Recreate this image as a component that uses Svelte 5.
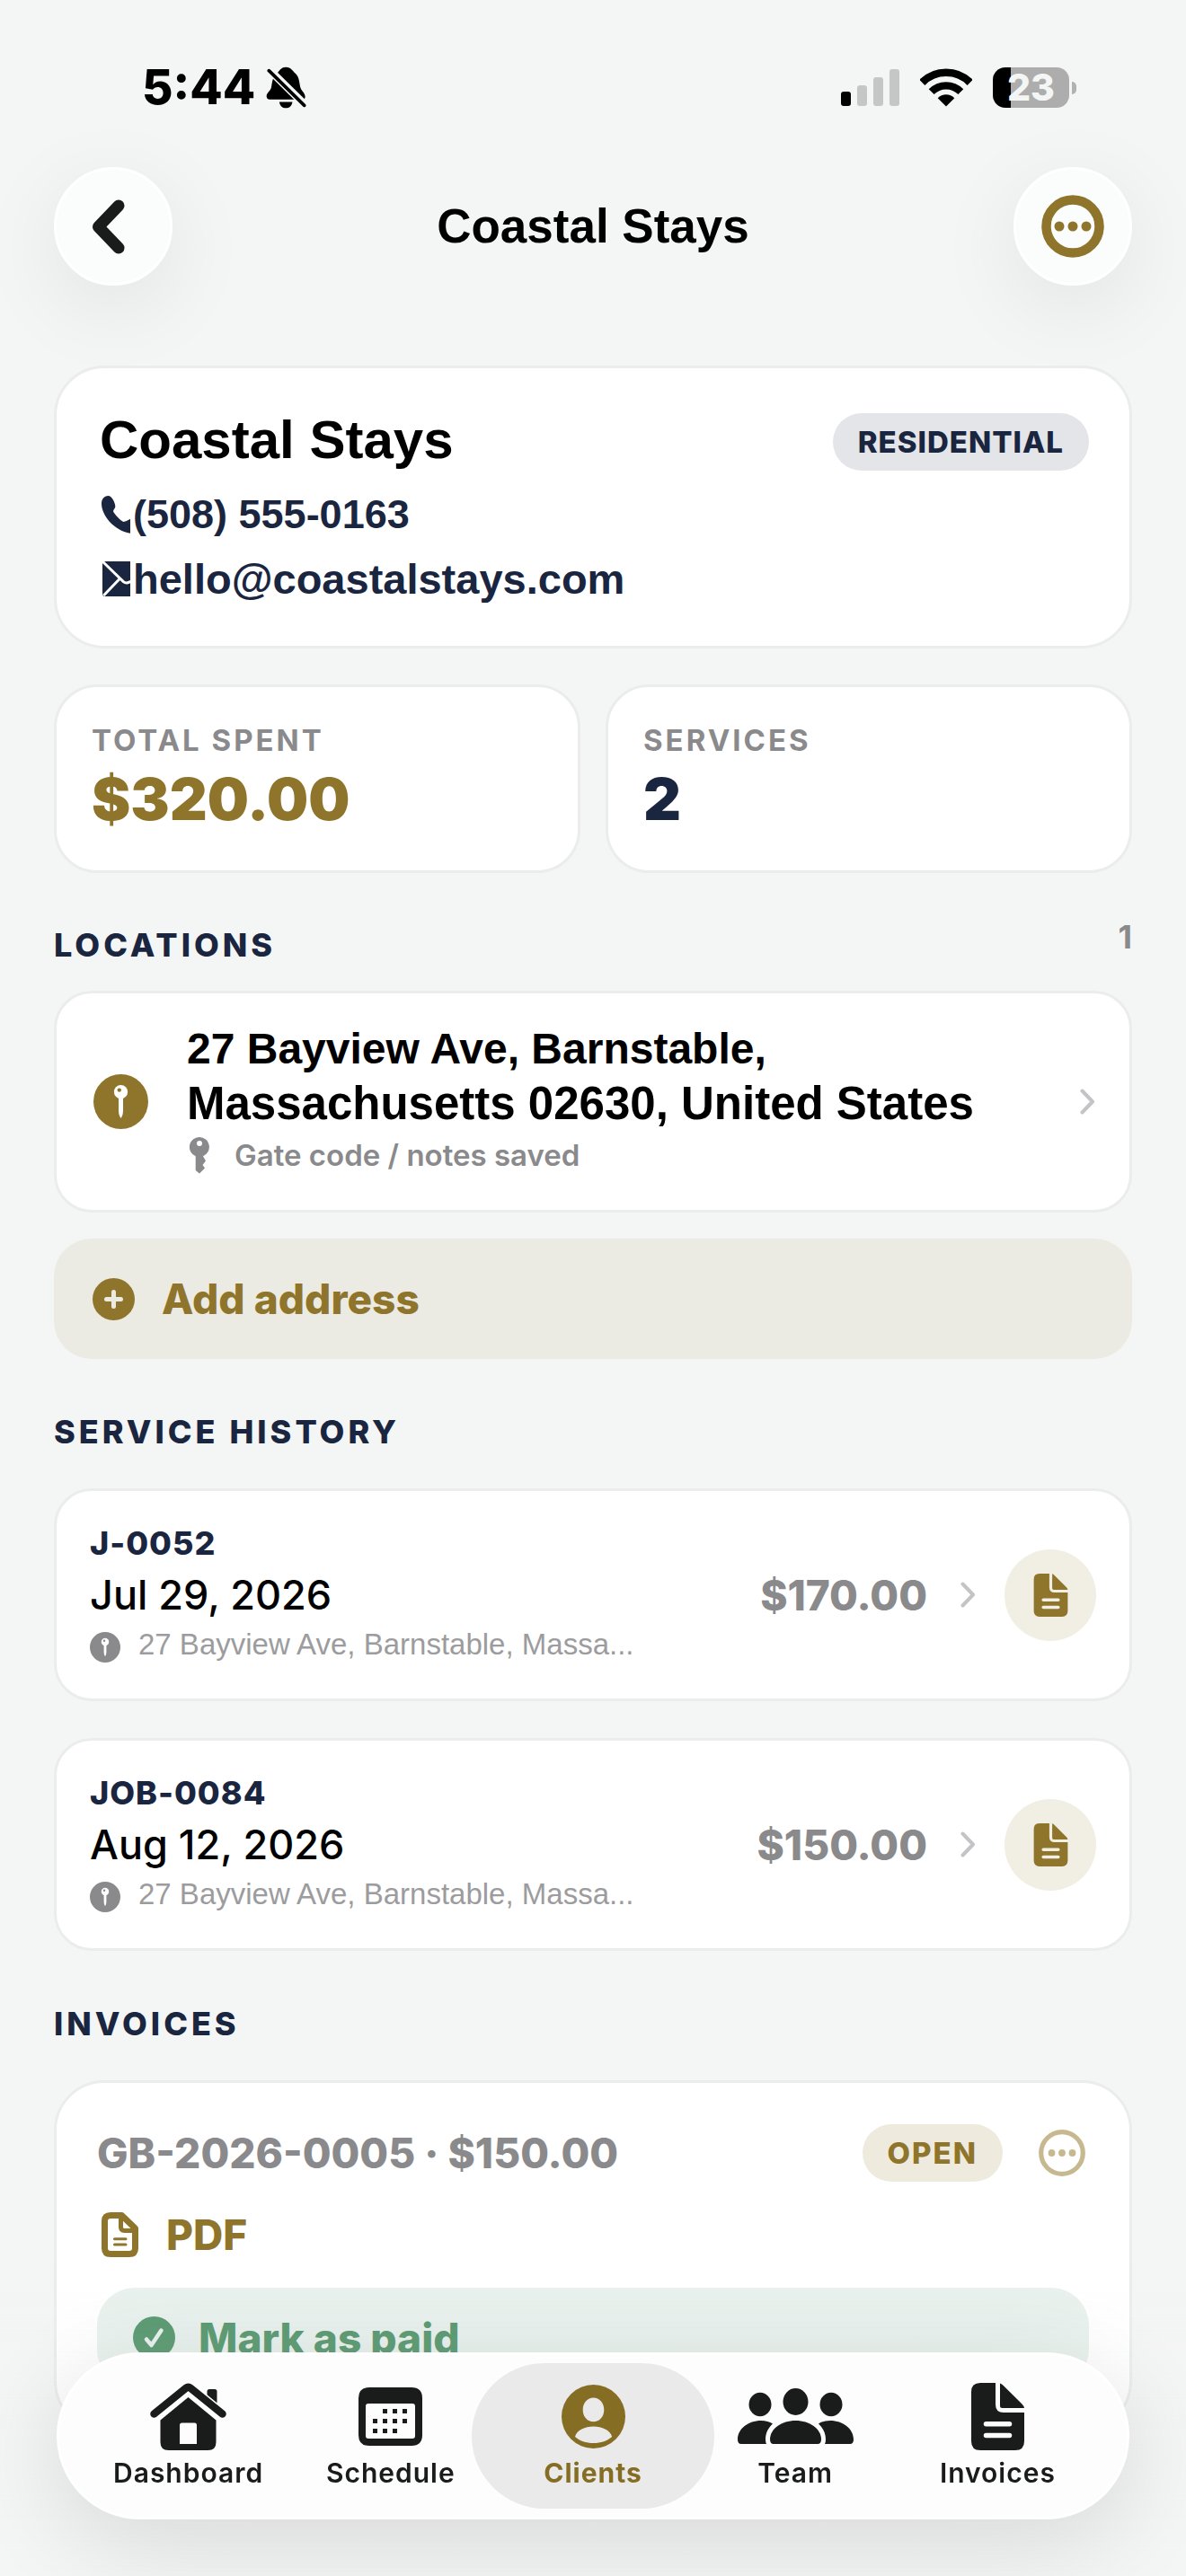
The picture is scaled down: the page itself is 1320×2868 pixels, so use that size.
<script lang="ts">
  const client = {
    name: "Coastal Stays",
    type: "RESIDENTIAL",
    phone: "(508) 555-0163",
    email: "hello@coastalstays.com",
  };

  const jobs = [
    { id: "J-0052", date: "Jul 29, 2026", address: "27 Bayview Ave, Barnstable, Massa...", price: "$170.00" },
    { id: "JOB-0084", date: "Aug 12, 2026", address: "27 Bayview Ave, Barnstable, Massa...", price: "$150.00" },
  ];

  const tabs = ["Dashboard", "Schedule", "Clients", "Team", "Invoices"];
  let active = $state("Clients");
</script>

{#snippet chevron()}
  <svg class="chevron" viewBox="0 0 17 29" width="17" height="29">
    <path d="M2.5 2.5 14 14.5 2.5 26.5" fill="none" stroke="#c4c4c6" stroke-width="4" stroke-linecap="round" stroke-linejoin="round" />
  </svg>
{/snippet}

{#snippet pin(size: number)}
  <svg viewBox="0 0 61 61" width={size} height={size}>
    <circle cx="30.5" cy="30.5" r="30.5" fill="currentColor" />
    <path d="M28 26h5v14q0 6-2.5 9-2.5-3-2.5-9z" fill="#fff" />
    <circle cx="30.5" cy="19.7" r="7.6" fill="#fff" />
    <circle cx="28.8" cy="17.6" r="2.2" fill="currentColor" />
  </svg>
{/snippet}

{#snippet doc(width: number, height: number)}
  <svg viewBox="0 0 59 75" {width} {height}>
    <path
      fill="currentColor"
      fill-rule="evenodd"
      d="M10 0H27V24q0 9 9 9H59V65q0 10-10 10H10Q0 75 0 65V10Q0 0 10 0ZM16.5 43a2.7 2.7 0 0 0 0 5.5h26a2.7 2.7 0 0 0 0-5.5ZM16.5 55.8a2.7 2.7 0 0 0 0 5.5h26a2.7 2.7 0 0 0 0-5.5ZM32 .5Q34 1 36 3.2L56 23Q58.5 25.5 59 28H34.5q-2.5 0-2.5-2.5Z"
    />
  </svg>
{/snippet}

<div class="page">
  <div class="status">
    <div class="status-left">
      <span class="time">5:44</span>
      <svg viewBox="440 42 136 142" width="45" height="47">
        <path d="M507 44C525 44 530 58 540 66C553 78 552 100 556 113C560 126 572 130 572 145C572 150 568 153 562 153H453C446 153 442 149 442 142C442 130 455 125 458 112C461 100 460 82 475 68C485 58 489 44 507 44Z" />
        <path d="M485 161H529C527 175 518 182 507 182S487 175 485 161Z" />
        <path d="M446 48 578 178" stroke="#f4f6f5" stroke-width="26" />
        <path d="M450 56 569 173" stroke="#000" stroke-width="11" stroke-linecap="round" />
      </svg>
    </div>
    <div class="status-right">
      <svg viewBox="0 0 65 41" width="65" height="41">
        <rect x="0" y="25" width="11" height="16" rx="3" />
        <g fill="#c5c7c6">
          <rect x="18" y="18" width="11" height="23" rx="3" />
          <rect x="36" y="9" width="11" height="32" rx="3" />
          <rect x="54" y="0" width="11" height="41" rx="3" />
        </g>
      </svg>
      <svg viewBox="314 44 174 128" width="58" height="43">
        <path d="M321 91A113 113 0 0 1 481 91" fill="none" stroke="#000" stroke-width="26" />
        <path d="M352 122A69 69 0 0 1 450 122" fill="none" stroke="#000" stroke-width="25" />
        <path d="M401 171 373 143A39 39 0 0 1 429 143Z" />
      </svg>
      <div class="battery"><span>23</span></div>
    </div>
  </div>

  <header class="topbar">
    <button class="round" aria-label="Back">
      <svg class="back" viewBox="0 0 37 61" width="37" height="61">
        <path d="M30 7 7.5 30.5 30 54" fill="none" stroke="#1a1b1b" stroke-width="13" stroke-linecap="round" stroke-linejoin="round" />
      </svg>
    </button>
    <h1>{client.name}</h1>
    <button class="round gold" aria-label="More">
      <svg viewBox="0 0 70 70" width="70" height="70">
        <circle cx="35" cy="35" r="29.5" fill="none" stroke="currentColor" stroke-width="10.5" />
        <g fill="currentColor">
          <circle cx="20" cy="35" r="5.5" />
          <circle cx="35" cy="35" r="5.5" />
          <circle cx="50" cy="35" r="5.5" />
        </g>
      </svg>
    </button>
  </header>

  <main>
    <section class="card client">
      <div class="client-head">
        <h2>{client.name}</h2>
        <span class="badge">{client.type}</span>
      </div>
      <a class="contact phone" href="tel:5085550163">
        <svg viewBox="33 30 102 138" width="34" height="46">
          <path fill="currentColor" d="M61 36C48 36 39 48 39 62C39 100 80 152 135 161V113C128 117 120 122 112 123C104 120 82 98 78 88C79 80 85 78 85 72C85 60 74 36 61 36Z" />
        </svg>
        {client.phone}
      </a>
      <a class="contact email" href="mailto:hello@coastalstays.com">
        <svg viewBox="33 249 102 138" width="34" height="46">
          <path fill="currentColor" d="M52 258H135V375H52Q42 375 42 365V268Q42 258 52 258Z" />
          <path d="M42 258 112 326Q122 334 136 325M100 316 46 372" fill="none" stroke="#fff" stroke-width="9" />
        </svg>
        {client.email}
      </a>
    </section>

    <section class="stats">
      <div class="card stat">
        <span class="label">TOTAL SPENT</span>
        <strong class="gold">$320.00</strong>
      </div>
      <div class="card stat">
        <span class="label">SERVICES</span>
        <strong>2</strong>
      </div>
    </section>

    <div class="heading-row">
      <h3>LOCATIONS</h3>
      <span class="count">1</span>
    </div>

    <a class="card location" href="#location">
      <span class="gold">{@render pin(61)}</span>
      <div class="location-body">
        <span class="addr-1">27 Bayview Ave, Barnstable,</span>
        <span class="addr-2">Massachusetts 02630, United States</span>
        <span class="note">
          <svg viewBox="0 0 22 41" width="22" height="41">
            <path
              fill="currentColor"
              fill-rule="evenodd"
              d="M11 0a11 11 0 0 1 4 21.2L18 26.5 14.5 31 17 34.5 11 40.6 6.7 37V21.2A11 11 0 0 1 11 0ZM11 4a3 3 0 1 0 0 6 3 3 0 0 0 0-6Z"
            />
          </svg>
          Gate code / notes saved
        </span>
      </div>
      {@render chevron()}
    </a>

    <button class="add">
      <svg viewBox="0 0 47 47" width="47" height="47">
        <circle cx="23.5" cy="23.5" r="23.5" fill="currentColor" />
        <path d="M23.5 15.5v16M15.5 23.5h16" stroke="#ecebe3" stroke-width="5" stroke-linecap="round" />
      </svg>
      Add address
    </button>

    <h3 class="heading">SERVICE HISTORY</h3>
    <div class="jobs">
      {#each jobs as job}
        <div class="card job">
          <div class="job-body">
            <span class="job-id">{job.id}</span>
            <span class="job-date">{job.date}</span>
            <span class="job-addr">{@render pin(34)}{job.address}</span>
          </div>
          <span class="price">{job.price}</span>
          {@render chevron()}
          <button class="doc-btn" aria-label="Open invoice">{@render doc(39, 48)}</button>
        </div>
      {/each}
    </div>

    <h3 class="heading">INVOICES</h3>
    <section class="card invoice">
      <div class="invoice-head">
        <span class="invoice-title">GB-2026-0005 · $150.00</span>
        <span class="badge open">OPEN</span>
        <button class="more" aria-label="Invoice options">
          <svg viewBox="0 0 52 52" width="52" height="52">
            <circle cx="26" cy="26" r="23.3" fill="none" stroke="currentColor" stroke-width="5.2" />
            <g fill="currentColor">
              <circle cx="14.5" cy="26" r="3.9" />
              <circle cx="26" cy="26" r="3.9" />
              <circle cx="37.5" cy="26" r="3.9" />
            </g>
          </svg>
        </button>
      </div>
      <a class="pdf" href="#pdf">
        <svg viewBox="0 0 41 50" width="41" height="50">
          <path d="M10 3.5H22.5L37.5 18V40Q37.5 46.5 31 46.5H10Q3.5 46.5 3.5 40V10Q3.5 3.5 10 3.5Z" fill="none" stroke="currentColor" stroke-width="7" stroke-linejoin="round" />
          <path d="M21.5 6V16.5Q21.5 20.5 25.5 20.5H36" fill="none" stroke="currentColor" stroke-width="5" />
          <path d="M14.5 29.8H27M14.5 36H27" stroke="currentColor" stroke-width="3" stroke-linecap="round" />
        </svg>
        PDF
      </a>
      <button class="paid">
        <svg viewBox="0 0 47 47" width="47" height="47">
          <circle cx="23.5" cy="23.5" r="23.5" fill="currentColor" />
          <path d="M15 25.5 20.5 32 31.5 15.5" fill="none" stroke="#e9f2ee" stroke-width="4.5" stroke-linecap="round" stroke-linejoin="round" />
        </svg>
        Mark as paid
      </button>
    </section>
  </main>

  <div class="fade"></div>

  <nav class="tabbar">
    {#each tabs as tab}
      <button class="tab" class:active={active === tab} onclick={() => (active = tab)}>
        <span class="tab-icon">
          {#if tab === "Dashboard"}
            <svg viewBox="0 0 85 75" width="85" height="75">
              <path d="M63.5 9.5q0-2.5 2.5-2.5h6q2.5 0 2.5 2.5V31L63.5 20Z" fill="currentColor" />
              <path d="M4.5 35.5 42.5 4.5 80.5 35.5" fill="none" stroke="#fcfdfc" stroke-width="13" />
              <path d="M4.5 34.5 40 5.8Q42.5 3.8 45 5.8L80.5 34.5" fill="none" stroke="currentColor" stroke-width="8.5" stroke-linecap="round" />
              <path d="M42.5 16 73.5 41.5V66q0 9-9 9h-44q-9 0-9-9V41.5ZM35.5 44.5q-2.5 0-2.5 2.5v21h19V47q0-2.5-2.5-2.5Z" fill="currentColor" fill-rule="evenodd" />
            </svg>
          {:else if tab === "Schedule"}
            <svg viewBox="0 0 71 65" width="71" height="65">
              <path d="M12 0H59Q71 0 71 12V53Q71 65 59 65H12Q0 65 0 53V12Q0 0 12 0ZM11 18Q8 18 8 21V54Q8 57 11 57H60Q63 57 63 54V21Q63 18 60 18Z" fill="currentColor" fill-rule="evenodd" />
              <g stroke="currentColor" stroke-width="5" stroke-dasharray="5 6">
                <path d="M27 26.5H56" />
                <path d="M16 37.5H56" />
                <path d="M16 48.5H45" />
              </g>
            </svg>
          {:else if tab === "Clients"}
            <svg viewBox="0 0 71 71" width="71" height="71">
              <path fill="currentColor" fill-rule="evenodd" d="M35.5 0a35.5 35.5 0 1 1 0 71 35.5 35.5 0 0 1 0-71ZM35.5 14.5C29 14.5 23.7 20 23.7 28S29 41.2 35.5 41.2 47.3 36 47.3 28 42 14.5 35.5 14.5ZM15 58C20 62.5 27 65 35.5 65S51 62.5 56.2 58C54 50.5 45 46.5 35.5 46.5S17 50.5 15 58Z" />
            </svg>
          {:else if tab === "Team"}
            <svg viewBox="0 0 129 62" width="129" height="62">
              <g fill="currentColor">
                <ellipse cx="64.5" cy="15" rx="14" ry="15" />
                <ellipse cx="25" cy="18" rx="12.5" ry="13.2" />
                <ellipse cx="104" cy="18" rx="12.5" ry="13.2" />
                <path d="M36 57C36 45 49 36 64.5 36S93 45 93 57Q93 62 89 62H40Q36 62 36 57Z" />
                <path d="M0 57C0 45 12 36 26 36Q34 36 39 39.5C34 44 31 50 31 57Q31 60 32 62H4Q0 62 0 57Z" />
                <path d="M129 57C129 45 117 36 103 36Q95 36 90 39.5C95 44 98 50 98 57Q98 60 97 62H125Q129 62 129 57Z" />
              </g>
            </svg>
          {:else}
            {@render doc(59, 75)}
          {/if}
        </span>
        <span class="tab-label">{tab}</span>
      </button>
    {/each}
  </nav>
</div>

<style>
  :global(body) {
    background: #f4f6f5;
  }

  .page {
    --gold: #8f752b;
    --navy: #1a263f;
    --grey: #8a8a8c;
    --arial: "Liberation Sans", Arial, sans-serif;
    min-height: 100vh;
    box-sizing: border-box;
    padding: 67px 60px 120px;
    font-family: Inter, sans-serif;
    color: #000;
  }

  svg {
    display: block;
    flex: none;
  }

  h1, h2, h3 {
    margin: 0;
  }

  button {
    border: none;
    padding: 0;
    font-family: inherit;
    cursor: pointer;
  }

  a {
    color: inherit;
    text-decoration: none;
  }

  .gold {
    color: var(--gold);
  }

  .status {
    display: flex;
    align-items: center;
    justify-content: space-between;
    height: 60px;
    padding: 0 70px 0 98px;
  }

  .status-left {
    display: flex;
    align-items: center;
    gap: 12px;
  }

  .time {
    font-size: 53px;
    line-height: 60px;
    font-weight: 800;
  }

  .status-right {
    display: flex;
    align-items: center;
    gap: 23px;
  }

  .battery {
    position: relative;
    width: 85px;
    height: 45px;
    border-radius: 14px;
    background: linear-gradient(to right, #000 20px, #adadad 20px);
    color: #f4f6f5;
    font-size: 41px;
    line-height: 45px;
    font-weight: 800;
    text-align: center;
  }

  .battery::after {
    content: "";
    position: absolute;
    left: 88px;
    top: 16px;
    width: 5px;
    height: 14px;
    border-radius: 0 7px 7px 0;
    background: #b0b1b1;
  }

  .topbar {
    display: flex;
    align-items: center;
    justify-content: space-between;
    margin: 59px 0 89px;
  }

  .topbar h1 {
    font-family: var(--arial);
    font-size: 53px;
    line-height: 60px;
  }

  .round {
    display: flex;
    align-items: center;
    justify-content: center;
    box-sizing: border-box;
    width: 132px;
    height: 132px;
    border: 3px solid #fff;
    border-radius: 50%;
    background: #fbfdfc;
    box-shadow: 0 24px 96px rgba(0, 0, 0, 0.08);
  }

  .back {
    margin-right: 12px;
  }

  .card {
    box-sizing: border-box;
    border: 3px solid #ebecec;
    border-radius: 42px;
    background: #fff;
  }

  .client {
    padding: 50px 45px 41px 48px;
    border-radius: 56px;
  }

  .client-head {
    display: flex;
    justify-content: space-between;
    margin-bottom: 16px;
  }

  .client-head h2 {
    font-family: var(--arial);
    font-size: 60px;
    line-height: 60px;
  }

  .badge {
    height: 64px;
    padding: 0 28px;
    border-radius: 32px;
    background: #e4e5e9;
    color: var(--navy);
    font-size: 33px;
    line-height: 64px;
    font-weight: 800;
    letter-spacing: 1px;
  }

  .contact {
    display: flex;
    align-items: center;
    gap: 3px;
    color: var(--navy);
    font-family: var(--arial);
    font-weight: 700;
    line-height: 66px;
  }

  .phone {
    font-size: 45px;
    margin-bottom: 6px;
  }

  .email {
    font-size: 47px;
  }

  .stats {
    display: grid;
    grid-template-columns: 1fr 1fr;
    gap: 28px;
    margin-top: 40px;
  }

  .stat {
    display: flex;
    flex-direction: column;
    gap: 6px;
    padding: 39px;
    border-radius: 48px;
  }

  .label {
    color: var(--grey);
    font-size: 33px;
    line-height: 40px;
    font-weight: 700;
    letter-spacing: 3px;
  }

  .stat strong {
    font-size: 65px;
    line-height: 80px;
    font-weight: 900;
  }

  .stat strong:not(.gold) {
    color: var(--navy);
  }

  .heading-row {
    display: flex;
    align-items: flex-start;
    justify-content: space-between;
    margin: 49px 0 29px;
  }

  .heading-row h3 {
    padding-top: 9px;
  }

  h3 {
    color: var(--navy);
    font-size: 36px;
    line-height: 44px;
    font-weight: 800;
    letter-spacing: 4px;
  }

  .heading {
    margin: 59px 0 41px;
  }

  .count {
    color: var(--grey);
    font-size: 36px;
    line-height: 44px;
    font-weight: 700;
  }

  .location {
    display: flex;
    align-items: center;
    padding: 0 38px 0 41px;
  }

  .location-body {
    flex: 1;
    display: flex;
    flex-direction: column;
    padding: 32px 0 41px 43px;
    font-family: var(--arial);
    font-weight: 700;
  }

  .addr-1 {
    font-size: 48px;
    line-height: 60px;
  }

  .addr-2 {
    font-size: 51px;
    line-height: 62px;
  }

  .note {
    display: flex;
    align-items: center;
    gap: 28px;
    height: 40px;
    margin-top: 6px;
    padding-left: 3px;
    color: var(--grey);
    font-family: Inter, sans-serif;
    font-size: 33px;
    font-weight: 600;
  }

  .add {
    display: flex;
    align-items: center;
    gap: 30px;
    width: 100%;
    height: 134px;
    margin-top: 29px;
    padding-left: 43px;
    border-radius: 42px;
    background: #ecebe3;
    color: var(--gold);
    font-size: 46px;
    font-weight: 800;
  }

  .jobs {
    display: flex;
    flex-direction: column;
    gap: 41px;
  }

  .job {
    display: flex;
    align-items: center;
    padding: 0 37px;
  }

  .job-body {
    flex: 1;
    display: flex;
    flex-direction: column;
    padding: 36px 0 40px;
  }

  .job-id {
    color: var(--navy);
    font-size: 36px;
    line-height: 44px;
    font-weight: 800;
    letter-spacing: 1px;
  }

  .job-date {
    margin-top: 8px;
    font-size: 45px;
    line-height: 56px;
    font-weight: 500;
  }

  .job-addr {
    display: flex;
    align-items: flex-end;
    gap: 20px;
    margin-top: 7px;
    color: #9c9c9e;
    font-family: var(--arial);
    font-size: 33px;
    line-height: 40px;
  }

  .job-addr svg {
    color: var(--grey);
  }

  .price {
    margin-right: 37px;
    color: var(--grey);
    font-size: 46px;
    font-weight: 800;
  }

  .doc-btn {
    display: flex;
    align-items: center;
    justify-content: center;
    width: 102px;
    height: 102px;
    margin-left: 32px;
    border-radius: 50%;
    background: #f1eee4;
    color: var(--gold);
  }

  .invoice {
    padding: 46px 45px;
    border-radius: 56px;
  }

  .invoice-head {
    display: flex;
    align-items: center;
  }

  .invoice-title {
    flex: 1;
    color: var(--grey);
    font-size: 46px;
    line-height: 56px;
    font-weight: 800;
  }

  .badge.open {
    background: #eeeade;
    color: var(--gold);
    letter-spacing: 2px;
  }

  .more {
    margin: 0 4px 0 40px;
    background: none;
    color: #c7b98f;
  }

  .pdf {
    display: flex;
    align-items: center;
    gap: 31px;
    margin: 31px 0;
    padding-left: 5px;
    color: var(--gold);
    font-size: 46px;
    line-height: 56px;
    font-weight: 800;
  }

  .paid {
    display: flex;
    align-items: center;
    gap: 26px;
    width: 100%;
    height: 111px;
    padding-left: 40px;
    border-radius: 42px;
    background: #e9f2ee;
    color: #54976c;
    font-size: 46px;
    font-weight: 800;
  }

  .fade {
    position: fixed;
    inset: auto 0 0;
    height: 360px;
    background: linear-gradient(rgba(244, 246, 245, 0), rgba(244, 246, 245, 0.3));
    pointer-events: none;
  }

  .tabbar {
    position: fixed;
    left: 63px;
    right: 63px;
    bottom: 63px;
    display: flex;
    box-sizing: border-box;
    height: 186px;
    padding: 9px 31px;
    border: 3px solid #fff;
    border-radius: 93px;
    background: #fcfdfc;
    box-shadow: 0 24px 110px rgba(0, 0, 0, 0.12);
  }

  .tab {
    position: relative;
    flex: 1 1 0;
    display: flex;
    flex-direction: column;
    align-items: center;
    padding-top: 20px;
    background: none;
    color: #1a1b1b;
  }

  .tab.active {
    color: #866d24;
  }

  .tab.active::before {
    content: "";
    position: absolute;
    inset: 0 -22px;
    border-radius: 81px;
    background: #e9eae9;
  }

  .tab-icon,
  .tab-label {
    position: relative;
  }

  .tab-icon {
    display: flex;
    align-items: center;
    height: 78px;
  }

  .tab-label {
    margin-top: 6px;
    font-size: 30px;
    line-height: 36px;
    font-weight: 600;
    letter-spacing: 1px;
  }

  .tab.active .tab-label {
    font-weight: 700;
  }
</style>
